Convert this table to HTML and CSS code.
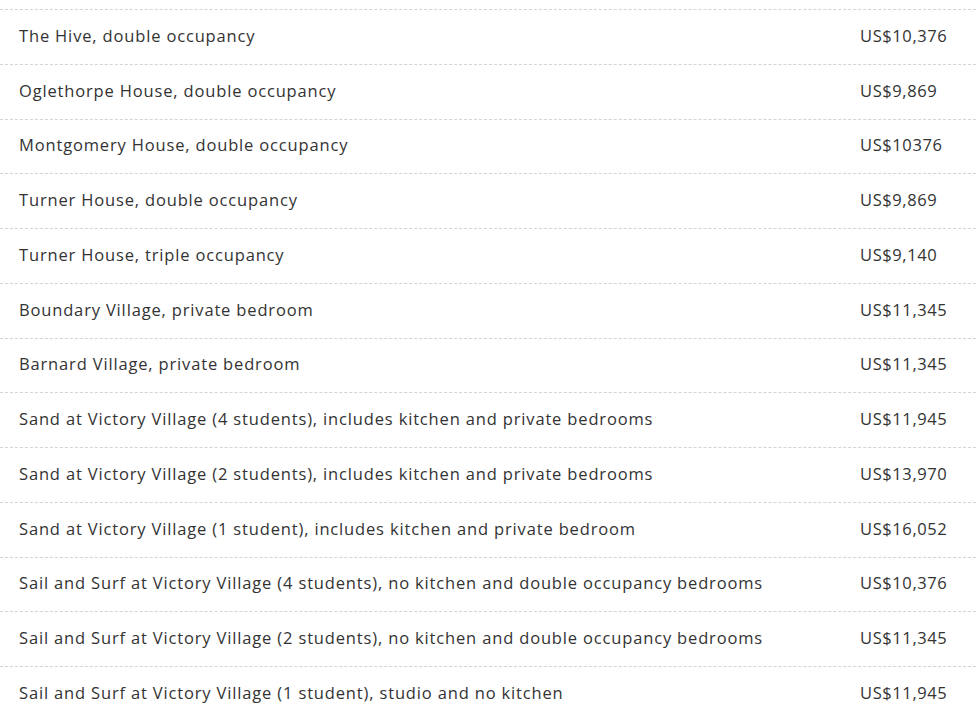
FILE: index.html
```
<!DOCTYPE html>
<html lang="en">
<head>
    <meta charset="UTF-8">
    <meta name="viewport" content="width=device-width, initial-scale=1.0">
    <title>Housing Rates</title>
    <link rel="stylesheet" href="styles.css">
</head>
<body>
    <div class="rates">
        <div class="rate-row"><span class="name">The Hive, double occupancy</span><span class="price">US$10,376</span></div>
        <div class="rate-row"><span class="name">Oglethorpe House, double occupancy</span><span class="price">US$9,869</span></div>
        <div class="rate-row"><span class="name">Montgomery House, double occupancy</span><span class="price">US$10376</span></div>
        <div class="rate-row"><span class="name">Turner House, double occupancy</span><span class="price">US$9,869</span></div>
        <div class="rate-row"><span class="name">Turner House, triple occupancy</span><span class="price">US$9,140</span></div>
        <div class="rate-row"><span class="name">Boundary Village, private bedroom</span><span class="price">US$11,345</span></div>
        <div class="rate-row"><span class="name">Barnard Village, private bedroom</span><span class="price">US$11,345</span></div>
        <div class="rate-row"><span class="name">Sand at Victory Village (4 students), includes kitchen and private bedrooms</span><span class="price">US$11,945</span></div>
        <div class="rate-row"><span class="name">Sand at Victory Village (2 students), includes kitchen and private bedrooms</span><span class="price">US$13,970</span></div>
        <div class="rate-row"><span class="name">Sand at Victory Village (1 student), includes kitchen and private bedroom</span><span class="price">US$16,052</span></div>
        <div class="rate-row"><span class="name">Sail and Surf at Victory Village (4 students), no kitchen and double occupancy bedrooms</span><span class="price">US$10,376</span></div>
        <div class="rate-row"><span class="name">Sail and Surf at Victory Village (2 students), no kitchen and double occupancy bedrooms</span><span class="price">US$11,345</span></div>
        <div class="rate-row"><span class="name">Sail and Surf at Victory Village (1 student), studio and no kitchen</span><span class="price">US$11,945</span></div>
    </div>
</body>
</html>
```

FILE: styles.css
```
body {
    margin: 0;
    background-color: #fff;
    color: #333;
    font-family: 'Open Sans', 'Liberation Sans', sans-serif;
    font-size: 16.5px;
}
.rates {
    padding-top: 9px;
}
.rate-row {
    display: grid;
    grid-template-columns: 1fr 116px;
    align-items: center;
    box-sizing: border-box;
    height: 54.75px;
    padding: 0 0 3px 19px;
    border-top: 1px dashed #d4d4d4;
    letter-spacing: 0.84px;
}
.price {
    letter-spacing: 0.6px;
}
```
